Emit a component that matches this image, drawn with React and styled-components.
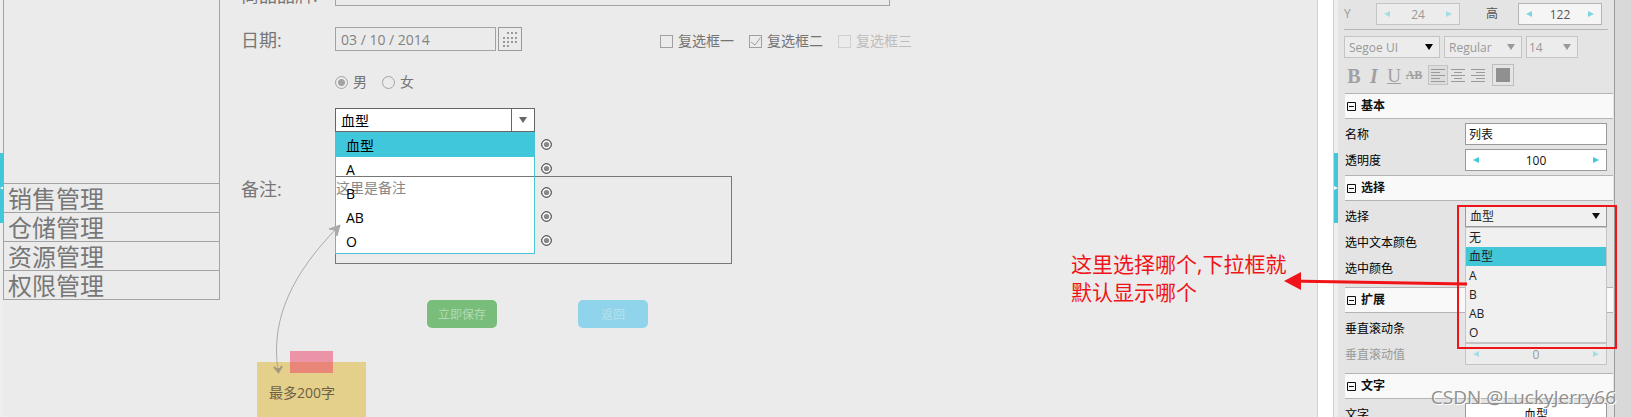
import React from 'react';
import styled, { createGlobalStyle } from 'styled-components';

const GlobalStyle = createGlobalStyle`
*{
box-sizing:border-box;
}
body{
margin:0;
background-color:#ebebeb;
}
body, input, select, textarea, button{
font-family:"Open Sans","Noto Sans CJK SC",sans-serif;
}
`;
const Shell = styled.div`
display:flex;
position:relative;
height:100vh;
overflow:hidden;
`;
const Rail = styled.div`
flex:none;
width:${p => p.$width}px;
background-color:#eeeeee;
padding-top:153px;
`;
const RailTab = styled.button`
display:flex;
align-items:center;
justify-content:center;
width:100%;
height:70px;
padding:0;
border:0;
background-color:#41c7db;
color:#fff;
`;
const Menu = styled.nav`
flex:none;
align-self:flex-start;
width:217px;
border:1px solid #a3a3a3;
border-top:0;
padding-top:183px;
`;
const MenuItem = styled.a`
display:block;
height:29px;
border-top:1px solid #a3a3a3;
padding-left:4px;
font-size:24px;
line-height:30px;
color:#777;
text-decoration:none;
`;
const Canvas = styled.main`
flex:1;
min-width:0;
padding-left:21px;
background-color:#ebebeb;
`;
const Form = styled.form`
margin-top:-18px;
`;
const Row = styled.div`
display:flex;
align-items:flex-start;
margin-bottom:${p => p.$gap}px;
`;
const Label = styled.label`
flex:none;
width:94px;
height:24px;
font-size:18px;
line-height:26px;
color:#777;
`;
const Indent = styled.div`
flex:none;
width:${p => p.$width}px;
`;
const TextField = styled.input`
width:${p => p.$width}px;
height:24px;
padding:0 5px;
border:1px solid #a3a3a3;
border-radius:0;
background-color:transparent;
font-size:14px;
color:#828282;
`;
const CalendarButton = styled.button`
display:flex;
align-items:center;
justify-content:center;
width:24px;
height:24px;
margin-left:2px;
padding:0;
border:1px solid #999;
background-color:transparent;
`;
const Choices = styled.div`
display:flex;
gap:${p => p.$gap}px;
padding-top:${p => p.$top}px;
margin-left:${p => p.$left}px;
`;
const Choice = styled.label`
display:flex;
align-items:center;
gap:5px;
height:${p => p.$height}px;
font-size:14px;
line-height:14px;
color:${p => (p.$off ? '#bdbdbd' : '#747474')};
`;
const CheckBox = styled.input`
appearance:none;
flex:none;
width:13px;
height:13px;
margin:0;
border:1px solid #a0a0a0;
&:disabled{
border-color:#cfcfcf;
}
&:checked{
background:url("data:image/svg+xml,%3Csvg xmlns='http://www.w3.org/2000/svg' width='11' height='11'%3E%3Cpath d='M1 6 L5 9 L10.5 1.5' fill='none' stroke='%23a0a0a0'/%3E%3C/svg%3E") no-repeat;
}
`;
const Radio = styled.input`
appearance:none;
flex:none;
width:13px;
height:13px;
margin:0;
border:1px solid #a3a3a3;
border-radius:50%;
&:checked{
background:radial-gradient(circle, #a3a3a3 3px, transparent 4px);
}
`;
const Combo = styled.div`
position:relative;
display:flex;
width:200px;
height:24px;
border:1px solid #666;
background-color:#fff;
`;
const ComboSelect = styled.select`
appearance:none;
flex:1;
border:0;
padding:0 5px;
background-color:transparent;
font-size:14px;
color:#000;
`;
const ComboArrow = styled.span`
display:flex;
align-items:center;
justify-content:center;
width:23px;
border-left:1px solid #666;
color:#666;
`;
/* the memo frame shows through the open list, the list border stays on top */
const Options = styled.ul`
position:absolute;
top:23px;
left:-1px;
width:200px;
margin:0;
padding:1px;
list-style:none;
background-color:#fff;
&::after{
content:"";
position:absolute;
inset:0;
z-index:2;
border:1px solid #4bc5d6;
pointer-events:none;
}
`;
const Option = styled.li`
position:relative;
height:24px;
padding-left:10px;
font-size:14px;
line-height:25px;
color:#000;
background-color:${p => (p.$active ? '#41c7db' : 'transparent')};
`;
const OptionText = styled.span`
position:relative;
z-index:2;
`;
const Target = styled.svg`
position:absolute;
top:6px;
right:-18px;
`;
const Memo = styled.textarea`
position:relative;
z-index:1;
width:397px;
height:88px;
padding:1px 0;
border:1px solid #777;
border-radius:0;
background-color:transparent;
resize:none;
font-size:14px;
line-height:20px;
color:#888;
`;
const Action = styled.button`
width:70px;
height:28px;
margin-right:81px;
padding:0;
border:0;
border-radius:5px;
background-color:${p => p.$bg};
color:${p => p.$color};
font-size:12px;
`;
const Note = styled.div`
position:absolute;
top:362px;
left:257px;
width:109px;
height:90px;
padding:21px 12px;
background-color:#e4cf8b;
font-size:14px;
line-height:20px;
color:#6c6143;
white-space:nowrap;
&::before{
content:"";
position:absolute;
top:-11px;
left:33px;
width:43px;
height:22px;
background-color:rgba(236,62,99,0.5);
}
`;
const Connector = styled.svg`
position:absolute;
z-index:3;
top:220px;
left:260px;
`;
const ScrollTrack = styled.div`
flex:none;
width:17px;
border:1px solid #d0d0d0;
border-width:0 1px;
background-color:#fff;
`;
const Panel = styled.aside`
flex:none;
width:277px;
padding:3px 1px 0 6px;
border-right:1px solid #9c9c9c;
background-color:#e4e4e4;
font-size:12px;
color:#111;
`;
const Margin = styled.div`
flex:none;
width:16px;
background-color:#d9d9d9;
`;
const PanelBar = styled.div`
display:flex;
align-items:center;
gap:${p => p.$gap}px;
height:22px;
margin-bottom:${p => p.$after}px;
`;
const Rule = styled.hr`
width:264px;
margin:0 0 6px;
border:0;
border-top:1px solid #b5b5b5;
`;
const SmallLabel = styled.label`
width:${p => p.$width}px;
line-height:22px;
color:${p => (p.$off ? '#999' : '#555')};
`;
const Stepper = styled.div`
display:flex;
align-items:center;
width:${p => p.$width}px;
height:22px;
border:1px solid ${p => (p.$off ? '#c4c4c4' : p.$soft ? '#b5b5b5' : '#999')};
background-color:${p => (p.$off ? '#ececec' : p.$soft ? '#f5f5f5' : '#fff')};
color:${p => (p.$off ? '#999' : p.$soft ? '#555' : '#111')};
`;
const StepButton = styled.button`
display:flex;
flex:none;
padding:0 7px;
border:0;
background-color:transparent;
color:${p => (p.$soft ? '#7dd6e2' : '#41c7db')};
&:disabled{
color:#a5dde4;
}
`;
const StepInput = styled.input`
flex:1;
min-width:0;
height:20px;
padding:0;
border:0;
background-color:transparent;
text-align:center;
font-size:12px;
color:inherit;
`;
const SelectBox = styled.div`
position:relative;
display:flex;
align-items:center;
width:${p => p.$width}px;
height:22px;
padding-right:6px;
border:1px solid ${p => (p.$off ? '#c4c4c4' : '#999')};
background-color:${p => (p.$off ? '#ececec' : '#f0f0f0')};
color:${p => p.$arrow};
`;
const PanelSelect = styled.select`
appearance:none;
flex:1;
min-width:0;
height:20px;
padding:0 ${p => p.$inset || 4}px;
border:0;
background-color:transparent;
font-size:12px;
color:${p => p.$color};
`;
const PanelInput = styled.input`
width:142px;
height:22px;
padding:0 3px;
border:1px solid #999;
border-radius:0;
background-color:#fff;
font-size:12px;
text-align:${p => p.$align};
color:#111;
`;
const Tools = styled.div`
display:flex;
align-items:center;
height:22px;
margin-bottom:7px;
`;
const Tool = styled.button`
display:flex;
align-items:center;
justify-content:center;
width:20px;
height:20px;
padding:0;
border:1px solid ${p => (p.$on ? '#c4c4c4' : 'transparent')};
background-color:${p => (p.$on ? '#dcdcdc' : 'transparent')};
`;
const Letter = styled.button`
width:20px;
height:20px;
padding:0;
border:0;
background-color:transparent;
color:#a0a0a0;
font-family:"Liberation Serif",serif;
font-size:${p => p.$size}px;
font-weight:${p => (p.$bold ? 700 : 400)};
font-style:${p => (p.$italic ? 'italic' : 'normal')};
text-decoration:${p => p.$line || 'none'};
`;
const Swatch = styled.button`
width:22px;
height:22px;
margin-left:4px;
padding:3px;
border:1px solid #bdbdbd;
background:#909090 content-box;
`;
const SectionBox = styled.section`
margin-left:1px;
`;
const SectionTitle = styled.h2`
display:flex;
align-items:center;
gap:5px;
height:26px;
margin:0;
padding-left:2px;
border:1px solid #b5b5b5;
border-width:1px 0;
background-color:#f9f9f9;
font-size:12px;
line-height:24px;
`;
const SectionBody = styled.div`
display:flex;
flex-direction:column;
gap:4px;
padding:4px 0 ${p => p.$after}px;
`;
const Property = styled.div`
display:flex;
height:22px;
`;
const PropertyLabel = styled.label`
width:120px;
line-height:23px;
color:${p => (p.$off ? '#999' : '#000')};
`;
const PanelOptions = styled.ul`
position:absolute;
z-index:2;
top:21px;
left:-1px;
width:142px;
margin:0;
padding:0;
border:1px solid #c4c4c4;
background-color:#f0f0f0;
list-style:none;
`;
const PanelOption = styled.li`
height:19px;
padding-left:3px;
line-height:20px;
color:#222;
background-color:${p => (p.$active ? '#43c7d8' : 'transparent')};
`;
const Remark = styled.p`
position:absolute;
top:250px;
right:340px;
width:220px;
margin:0;
font-size:21px;
line-height:28px;
color:#f01418;
white-space:nowrap;
`;
const Highlight = styled.svg`
position:absolute;
z-index:4;
top:200px;
right:11px;
pointer-events:none;
`;
const Watermark = styled.div`
position:absolute;
z-index:5;
right:15px;
bottom:7px;
font-size:19px;
line-height:26px;
color:#909090;
text-shadow:1px 1px 0 #fff;
white-space:nowrap;
`;

const Triangle = ({dir, size = 6}) => {
  const paths = {
    left: 'M6 0V6L0 3Z',
    right: 'M0 0V6L6 3Z',
    down: 'M0 0H8L4 6Z',
  };
  return (
      <svg width={dir === 'down' ? size + 2 : size} height={size} viewBox={dir === 'down' ? '0 0 8 6' : '0 0 6 6'}>
        <path d={paths[dir]} fill="currentColor"/>
      </svg>
  );
};

const dots = [[4, 0], [8, 0], [12, 0], [0, 5], [4, 5], [8, 5], [12, 5], [0, 9], [4, 9], [8, 9], [12, 9], [0, 13], [4, 13]];
const CalendarIcon = () => (
    <svg width="14" height="15" fill="#999">
      {dots.map(([x, y]) => <rect key={`${x}-${y}`} x={x} y={y} width="2" height="2"/>)}
    </svg>
);

const alignLines = {
  left: [[0, 14], [0, 9], [0, 14], [0, 9], [0, 14]],
  center: [[0, 14], [3, 8], [0, 14], [3, 8], [0, 14]],
  right: [[0, 14], [5, 9], [0, 14], [5, 9], [0, 14]],
};
const AlignIcon = ({kind}) => (
    <svg width="14" height="13" fill="#9a9a9a">
      {alignLines[kind].map(([x, w], i) => <rect key={i} x={x} y={i * 3} width={w} height="1"/>)}
    </svg>
);

const NumberField = ({id, value, width, off, soft}) => (
    <Stepper $width={width} $off={off} $soft={soft}>
      <StepButton type="button" aria-label="-" disabled={off} $soft={soft}><Triangle dir="left"/></StepButton>
      <StepInput id={id} defaultValue={value} disabled={off}/>
      <StepButton type="button" aria-label="+" disabled={off} $soft={soft}><Triangle dir="right"/></StepButton>
    </Stepper>
);

const FontSelect = ({label, value, width, arrow, inset}) => (
    <SelectBox $width={width} $off $arrow={arrow}>
      <PanelSelect aria-label={label} $color="#999" $inset={inset} defaultValue={value}>
        <option>{value}</option>
      </PanelSelect>
      <Triangle dir="down"/>
    </SelectBox>
);

const Section = ({title, after, children}) => (
    <SectionBox>
      <SectionTitle>
        <svg width="9" height="9" fill="none" stroke="#111">
          <path d="M.5 .5H8.5V8.5H.5ZM2 4.5H7"/>
        </svg>
        {title}
      </SectionTitle>
      <SectionBody $after={after}>{children}</SectionBody>
    </SectionBox>
);

const menu = ['销售管理', '仓储管理', '资源管理', '权限管理'];
const bloodTypes = ['血型', 'A', 'B', 'AB', 'O'];

const ProductForm = () => (
    <Form>
      <Row $gap={21}>
        <Label htmlFor="brand">商品品牌:</Label>
        <TextField id="brand" $width={555}/>
      </Row>
      <Row $gap={24}>
        <Label htmlFor="date">日期:</Label>
        <TextField id="date" $width={161} defaultValue="03 / 10 / 2014"/>
        <CalendarButton type="button" aria-label="日期"><CalendarIcon/></CalendarButton>
        <Choices $gap={15} $top={4} $left={138}>
          <Choice $height={20}><CheckBox type="checkbox"/>复选框一</Choice>
          <Choice $height={20}><CheckBox type="checkbox" defaultChecked/>复选框二</Choice>
          <Choice $height={20} $off><CheckBox type="checkbox" disabled/>复选框三</Choice>
        </Choices>
      </Row>
      <Row $gap={19}>
        <Choices $gap={15} $top={0} $left={94}>
          <Choice $height={14}><Radio type="radio" name="sex" defaultChecked/>男</Choice>
          <Choice $height={14}><Radio type="radio" name="sex"/>女</Choice>
        </Choices>
      </Row>
      <Row $gap={44}>
        <Indent $width={94}/>
        <Combo>
          <ComboSelect aria-label="血型" defaultValue="血型">
            {bloodTypes.map(t => <option key={t}>{t}</option>)}
          </ComboSelect>
          <ComboArrow><Triangle dir="down"/></ComboArrow>
          <Options>
            {bloodTypes.map((t, i) => (
                <Option key={t} $active={i === 0}>
                  <OptionText>{t}</OptionText>
                  <Target width="11" height="11">
                    <circle cx="5.5" cy="5.5" r="4.8" fill="#f4f4f4" stroke="#222"/>
                    <circle cx="5.5" cy="5.5" r="2.6" fill="#888"/>
                  </Target>
                </Option>
            ))}
          </Options>
        </Combo>
      </Row>
      <Row $gap={36}>
        <Label htmlFor="memo">备注:</Label>
        <Memo id="memo" defaultValue="这里是备注"/>
      </Row>
      <Row $gap={0}>
        <Indent $width={186}/>
        <Action type="button" $bg="#78bd79" $color="#b4d9b4">立即保存</Action>
        <Action type="button" $bg="#8fd4ea" $color="#b9e0ec">返回</Action>
      </Row>
    </Form>
);

const Inspector = () => (
    <Panel>
      <PanelBar $gap={0} $after={4}>
        <SmallLabel htmlFor="y" $width={32} $off>Y</SmallLabel>
        <NumberField id="y" value="24" width={84} off/>
        <Indent $width={26}/>
        <SmallLabel htmlFor="h" $width={32}>高</SmallLabel>
        <NumberField id="h" value="122" width={84} soft/>
      </PanelBar>
      <Rule/>
      <PanelBar $gap={4} $after={6}>
        <FontSelect label="字体" value="Segoe UI" width={96} arrow="#000"/>
        <FontSelect label="字形" value="Regular" width={78} arrow="#999"/>
        <FontSelect label="字号" value="14" width={52} arrow="#999" inset={2}/>
      </PanelBar>
      <Tools>
        <Letter $size={20} $bold>B</Letter>
        <Letter $size={20} $bold $italic>I</Letter>
        <Letter $size={19} $line="underline">U</Letter>
        <Letter $size={12} $bold $line="line-through">AB</Letter>
        <Indent $width={4}/>
        <Tool aria-label="left" $on><AlignIcon kind="left"/></Tool>
        <Tool aria-label="center"><AlignIcon kind="center"/></Tool>
        <Tool aria-label="right"><AlignIcon kind="right"/></Tool>
        <Swatch aria-label="color"/>
      </Tools>
      <Section title="基本" after={4}>
        <Property>
          <PropertyLabel htmlFor="name">名称</PropertyLabel>
          <PanelInput id="name" defaultValue="列表" $align="left"/>
        </Property>
        <Property>
          <PropertyLabel htmlFor="alpha">透明度</PropertyLabel>
          <NumberField id="alpha" value="100" width={142}/>
        </Property>
      </Section>
      <Section title="选择" after={8}>
        <Property>
          <PropertyLabel htmlFor="pick">选择</PropertyLabel>
          <SelectBox $width={142} $arrow="#111">
            <PanelSelect id="pick" $color="#222" defaultValue="血型">
              {['无', ...bloodTypes].map(t => <option key={t}>{t}</option>)}
            </PanelSelect>
            <Triangle dir="down"/>
            <PanelOptions>
              {['无', ...bloodTypes].map(t => (
                  <PanelOption key={t} $active={t === '血型'}>{t}</PanelOption>
              ))}
            </PanelOptions>
          </SelectBox>
        </Property>
        <Property><PropertyLabel>选中文本颜色</PropertyLabel></Property>
        <Property><PropertyLabel>选中颜色</PropertyLabel></Property>
      </Section>
      <Section title="扩展" after={8}>
        <Property><PropertyLabel>垂直滚动条</PropertyLabel></Property>
        <Property>
          <PropertyLabel htmlFor="scroll" $off>垂直滚动值</PropertyLabel>
          <NumberField id="scroll" value="0" width={142} off/>
        </Property>
      </Section>
      <Section title="文字" after={4}>
        <Property>
          <PropertyLabel htmlFor="text">文字</PropertyLabel>
          <PanelInput id="text" defaultValue="血型" $align="center"/>
        </Property>
      </Section>
    </Panel>
);

const App = () => {
  return (
      <Shell>
        <GlobalStyle/>
        <Rail $width={3}>
          <RailTab aria-label="collapse"><Triangle dir="left" size={4}/></RailTab>
        </Rail>
        <Menu>
          {menu.map(m => <MenuItem key={m} href="#">{m}</MenuItem>)}
        </Menu>
        <Canvas>
          <ProductForm/>
        </Canvas>
        <Note>最多200字</Note>
        <Connector width="90" height="160" fill="none" stroke="#aaa">
          <path d="M77 8C34 52 10 98 18 150"/>
          <path d="M80 5L69 9L75 10L77 16Z" fill="#aaa"/>
          <path d="M14 147L18.500 152L22 146M16 149L21 149" strokeWidth="2" stroke="#a39a7c"/>
        </Connector>
        <ScrollTrack/>
        <Rail $width={4}>
          <RailTab aria-label="collapse"><Triangle dir="right" size={4}/></RailTab>
        </Rail>
        <Inspector/>
        <Margin/>
        <Remark>这里选择哪个,下拉框就<br/>默认显示哪个</Remark>
        <Highlight width="340" height="155" fill="none" stroke="#f01418">
          <rect x="178" y="6" width="158" height="142" strokeWidth="2"/>
          <path d="M8 81L187 84" strokeWidth="3"/>
          <path d="M4 81L21 72V90Z" fill="#f01418" stroke="none"/>
        </Highlight>
        <Watermark>CSDN @LuckyJerry66</Watermark>
      </Shell>
  );
};

export default App;
